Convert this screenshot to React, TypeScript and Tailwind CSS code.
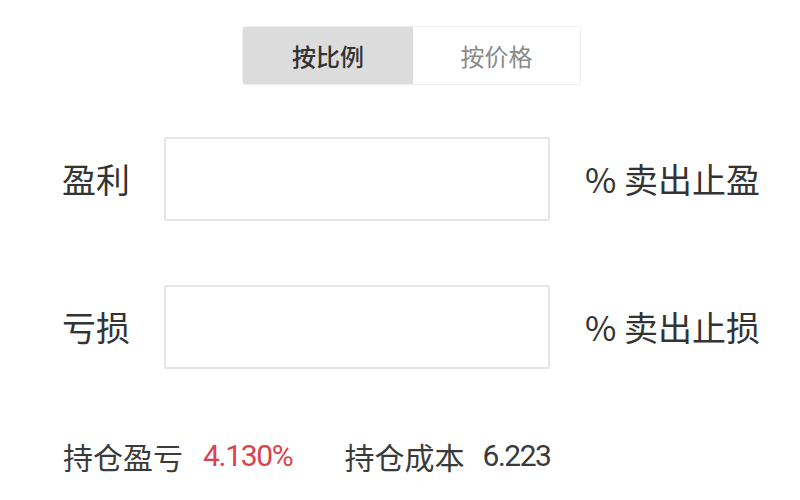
import React from "react";

export default function App() {
  return (
    <div
      className="w-[800px] h-[500px] bg-white overflow-hidden flex flex-col"
      style={{ fontFamily: '"Noto Sans CJK SC", "Noto Sans", sans-serif' }}
    >
      <div className="flex mt-[26px] ml-[242px] w-[339px] h-[59px] border border-[#ededed] rounded-[3px] overflow-hidden">
        <div className="w-[170px] bg-[#dcdcdc] flex items-center justify-center text-[24px] font-medium text-[#333333] leading-none">
          按比例
        </div>
        <div className="flex-1 bg-white flex items-center justify-center text-[24px] text-[#8a8a8a] leading-none">
          按价格
        </div>
      </div>

      <div className="flex items-center mt-[52px] pl-[62px]">
        <div className="w-[102px] text-[34px] leading-none text-[#333333]">盈利</div>
        <div className="w-[386px] h-[84px] border-2 border-[#e6e6e6] rounded-[2px]" />
        <div className="ml-[35px] text-[34px] leading-none text-[#333333]">% 卖出止盈</div>
      </div>

      <div className="flex items-center mt-[64px] pl-[62px]">
        <div className="w-[102px] text-[34px] leading-none text-[#333333]">亏损</div>
        <div className="w-[386px] h-[84px] border-2 border-[#e6e6e6] rounded-[2px]" />
        <div className="ml-[35px] text-[34px] leading-none text-[#333333]">% 卖出止损</div>
      </div>

      <div className="flex items-center mt-[72px] pl-[63px] text-[30px] leading-none text-[#3a3a3a]">
        <span>持仓盈亏</span>
        <span className="ml-[20px] text-[#d9434b] font-['Roboto'] tracking-[-1.3px]">4.130%</span>
        <span className="ml-[52px]">持仓成本</span>
        <span className="ml-[18px] font-['Roboto'] tracking-[-1.5px]">6.223</span>
      </div>
    </div>
  );
}
